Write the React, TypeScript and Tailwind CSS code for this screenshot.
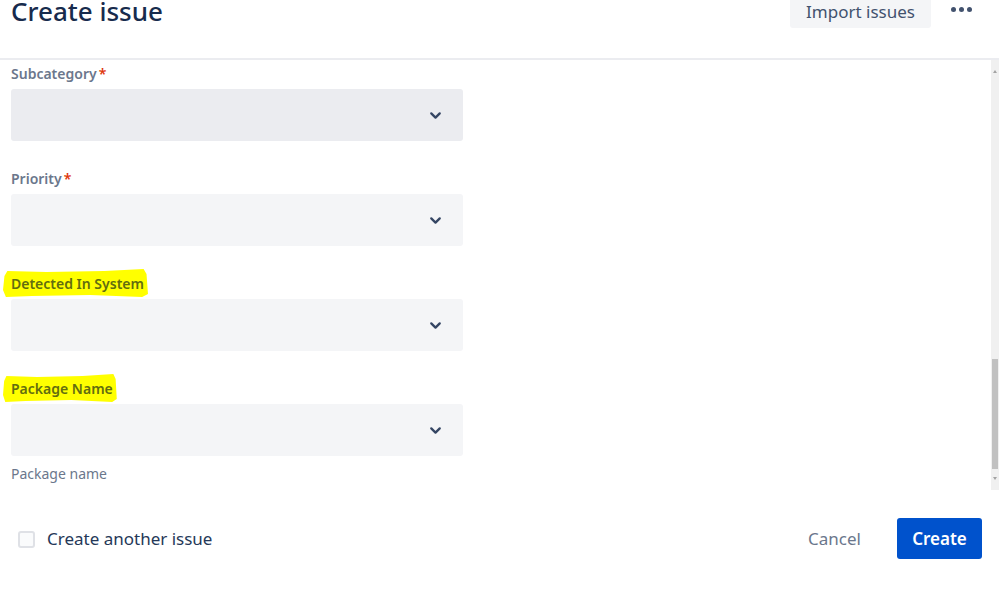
import { ChevronDown } from "lucide-react";

type Field = {
  label: string;
  required?: boolean;
  highlight?: boolean;
  hint?: string;
  active?: boolean;
};

const fields: Field[] = [
  { label: "Subcategory", required: true, active: true },
  { label: "Priority", required: true },
  { label: "Detected In System", highlight: true },
  { label: "Package Name", highlight: true, hint: "Package name" },
];

function Marker() {
  // rough highlighter stroke behind the label
  return (
    <svg
      className="absolute -left-[8px] -top-[6px] h-[30px] w-[calc(100%+12px)]"
      viewBox="0 0 100 30"
      preserveAspectRatio="none"
    >
      <path
        d="M1 8 L3 3 L30 4 L70 3 L97 1 L99 6 L100 26 L96 29 L60 27 L20 28 L2 29 L0 22 Z"
        fill="#ffff00"
      />
    </svg>
  );
}

function FieldRow({ field }: { field: Field }) {
  return (
    <div className="flex flex-col pb-[28px]">
      <div className="flex h-[20px] items-center">
        <span
          className={`relative text-[14px] font-semibold leading-[20px] ${
            field.highlight ? "text-[#626d10]" : "text-[#6b778c]"
          }`}
        >
          {field.highlight && <Marker />}
          <span className="relative">{field.label}</span>
          {field.required && <span className="relative ml-[2px] text-[#de350b]">*</span>}
        </span>
      </div>
      <div
        className={`mt-[5px] flex h-[52px] w-[452px] items-center justify-end rounded-[3px] pr-[19px] ${
          field.active ? "bg-[#ebecf0]" : "bg-[#f4f5f7]"
        }`}
      >
        <ChevronDown size={17} strokeWidth={3.2} className="text-[#344563]" />
      </div>
      {field.hint && (
        <div className="mt-[8px] text-[14px] leading-[20px] text-[#6b778c]">{field.hint}</div>
      )}
    </div>
  );
}

export default function App() {
  return (
    <div
      className="flex h-[590px] w-[999px] flex-col overflow-hidden bg-white"
      style={{ fontFamily: '"Noto Sans", "Open Sans", sans-serif' }}
    >
      <div className="flex h-[60px] shrink-0 items-start justify-between border-b-2 border-[#ebecf0]">
        <h1 className="-mt-[7px] ml-[11px] text-[26px] font-medium leading-[36px] text-[#172b4d]">
          Create issue
        </h1>
        <div className="flex items-start">
          <button className="flex h-[28px] w-[141px] items-center justify-center rounded-b-[3px] bg-[#f4f5f7] pb-[4px] text-[17px] text-[#42526e]">
            Import issues
          </button>
          <div className="ml-[20px] mr-[27px] mt-[7px] flex gap-[3px]">
            <span className="h-[5px] w-[5px] rounded-full bg-[#42526e]" />
            <span className="h-[5px] w-[5px] rounded-full bg-[#42526e]" />
            <span className="h-[5px] w-[5px] rounded-full bg-[#42526e]" />
          </div>
        </div>
      </div>

      <div className="flex h-[430px] shrink-0">
        <div className="flex-1 overflow-hidden pl-[11px] pt-[4px]">
          {fields.map((f) => (
            <FieldRow key={f.label} field={f} />
          ))}
        </div>
        <div className="flex w-[8px] flex-col items-center bg-[#f0f0f0] py-[8px]">
          <span className="mt-[2px] h-0 w-0 border-x-[2px] border-b-[3px] border-x-transparent border-b-[#a3a3a3]" />
          <div className="flex-1" />
          <div className="h-[110px] w-[6px] bg-[#c1c1c1]" />
          <span className="mb-[2px] mt-[8px] h-0 w-0 border-x-[2px] border-t-[3px] border-x-transparent border-t-[#a3a3a3]" />
        </div>
      </div>

      <div className="flex flex-1 items-start justify-between pt-[28px]">
        <label className="ml-[18px] mt-[11px] flex items-center gap-[12px]">
          <span className="h-[17px] w-[17px] rounded-[3px] border-2 border-[#dfe1e6] bg-[#fafbfc]" />
          <span className="text-[17px] leading-[20px] text-[#253858]">Create another issue</span>
        </label>
        <div className="mr-[17px] flex items-center">
          <button className="mr-[36px] text-[17px] text-[#6b778c]">Cancel</button>
          <button className="h-[41px] w-[85px] rounded-[3px] bg-[#0052cc] text-[17px] font-semibold text-white">
            Create
          </button>
        </div>
      </div>
    </div>
  );
}
